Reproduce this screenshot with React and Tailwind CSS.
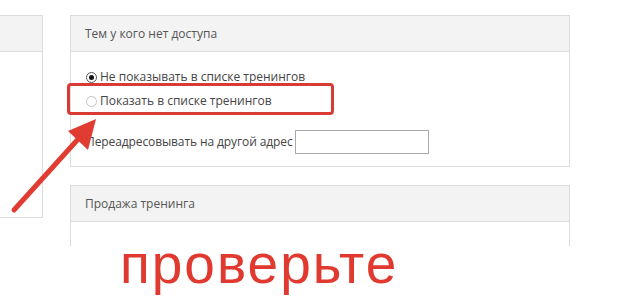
import React from 'react';

const Radio = ({ checked }) => (
  <span
    className={`flex h-[11px] w-[11px] shrink-0 items-center justify-center rounded-full border bg-white ${
      checked ? 'border-[#555]' : 'border-[#c4c4c4]'
    }`}
  >
    {checked && <span className="h-[5px] w-[5px] rounded-full bg-[#111]" />}
  </span>
);

const Panel = ({ title, children, className = '' }) => (
  <div className={`border border-[#dcdcdc] bg-white ${className}`}>
    <div className="flex h-[36px] items-center border-b border-[#dcdcdc] bg-[#f3f3f3] px-[14px] text-[12px] text-[#555]">
      {title}
    </div>
    {children}
  </div>
);

const App = () => {
  return (
    <div
      className="relative h-[307px] w-[617px] overflow-hidden bg-white"
      style={{ fontFamily: '"Open Sans", "Noto Sans", sans-serif' }}
    >
      <div className="flex pt-[15px]">
        {/* left column, mostly cropped */}
        <div className="h-[203px] w-[43px] shrink-0 border-y border-r border-[#dcdcdc]">
          <div className="h-[36px] border-b border-[#dcdcdc] bg-[#f3f3f3]" />
        </div>

        <div className="ml-[27px] flex w-[500px] flex-col gap-[18px]">
          <Panel title="Тем у кого нет доступа" className="h-[152px]">
            <div className="flex flex-col pl-[15px] pt-[13px] text-[12px] text-[#444]">
              <label className="flex h-[24px] items-center gap-[3px]">
                <Radio checked />
                Не показывать в списке тренингов
              </label>
              <label className="flex h-[24px] items-center gap-[3px]">
                <Radio />
                Показать в списке тренингов
              </label>
              <div className="mt-[17px] flex items-center gap-[2px]">
                <span className="tracking-[-0.1px]">Переадресовывать на другой адрес</span>
                <input
                  type="text"
                  className="h-[24px] w-[134px] border border-[#a9a9a9] bg-white px-1 text-[12px] outline-none"
                />
              </div>
            </div>
          </Panel>

          <div className="h-[61px] border-x border-t border-[#dcdcdc]">
            <div className="flex h-[36px] items-center border-b border-[#dcdcdc] bg-[#f3f3f3] px-[14px] text-[12px] text-[#555]">
              Продажа тренинга
            </div>
          </div>
        </div>
      </div>

      <div
        className="ml-[120px] mt-[-9px] text-[55px] leading-none tracking-[2px] text-[#e0392f]"
        style={{ fontFamily: '"Liberation Sans", Arial, sans-serif' }}
      >
        проверьте
      </div>

      {/* annotation frame */}
      <div className="absolute left-[67px] top-[83px] h-[32px] w-[267px] rounded-[4px] border-[3px] border-[#d93a33]" />

      {/* annotation arrow */}
      <svg className="absolute left-0 top-0" width="617" height="307" viewBox="0 0 617 307">
        <line x1="14" y1="210" x2="80" y2="137" stroke="#e03c31" strokeWidth="5" strokeLinecap="round" />
        <polygon points="96,119 68,131 88,150" fill="#e03c31" />
      </svg>
    </div>
  );
};

export default App;
